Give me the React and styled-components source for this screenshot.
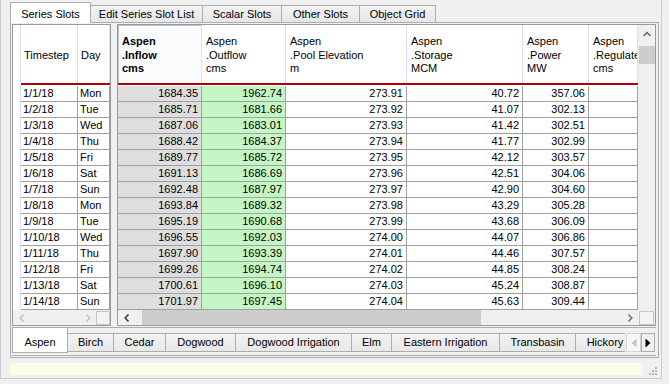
import React from 'react';
import styled, { createGlobalStyle, css } from 'styled-components';

const GlobalStyle = createGlobalStyle`
  html, body { margin: 0; padding: 0; background: #f0f0f0; }
  body { font-family: "Liberation Sans", Arial, sans-serif; font-size: 11px; color: #000; }
  * { box-sizing: border-box; }
`;

const Frame = styled.div`
  width: 662px;
  height: 379px;
  border: 1px solid #cdcdcd;
  border-top: none;
  padding: 0 2px 0 9px;
  display: flex;
  flex-direction: column;
  & > * { flex-shrink: 0; }
`;

const TopTabBar = styled.div`
  height: 22px;
  display: flex;
  align-items: flex-end;
  position: relative;
  z-index: 2;
`;

const TopTab = styled.div`
  width: ${p => p.$w}px;
  height: 17px;
  margin-left: -1px;
  border: 1px solid #adadad;
  border-bottom: none;
  background: linear-gradient(#f2f2f2, #e7e7e7);
  display: flex;
  align-items: center;
  justify-content: center;
  line-height: 16px;
  white-space: nowrap;
  &:first-child { margin-left: 0; }
  ${p => p.$active && css`
    height: 21px;
    margin-bottom: -1px;
    background: #ffffff;
    align-items: flex-start;
    padding-top: 3px;
    position: relative;
    z-index: 1;
  `}
`;

const Pane = styled.div`
  height: 336px;
  border: 1px solid #adadad;
  background: #f0f0f0;
  padding: 1px 2px 1px 1px;
  display: flex;
  flex-direction: column;
  & > * { flex-shrink: 0; }
`;

const TablesRow = styled.div`
  display: flex;
  gap: 6px;
  height: 302px;
`;

const Table = styled.div`
  width: ${p => p.$w}px;
  height: 302px;
  border: 1px solid #9a9a9a;
  background: #ffffff;
  display: flex;
  flex-direction: column;
  overflow: hidden;
`;

const GridRow = styled.div`
  display: grid;
  grid-template-columns: ${p => p.$cols};
  height: ${p => p.$h}px;
`;

const HeadCell = styled.div`
  border-right: 1px solid #d6e2ef;
  padding: 3px 0 0 ${p => p.$pl ?? 4}px;
  display: flex;
  flex-direction: column;
  justify-content: center;
  line-height: 13.5px;
  white-space: nowrap;
  overflow: hidden;
  font-weight: ${p => (p.$bold ? 'bold' : 'normal')};
  ${p => p.$current && css`
    box-shadow: inset 1px 1px 0 #b4bdc9;
    background: #fbfcfd;
  `}
`;

const RedLine = styled.div`
  height: 2px;
  margin-left: ${p => p.$indent || 0}px;
  background: #b20000;
`;

const Body = styled.div`
  padding-top: 1px;
  display: flex;
  flex-direction: column;
`;

const Cell = styled.div`
  height: 16px;
  line-height: 15px;
  border-right: 1px solid #a0a0a0;
  border-bottom: 1px solid #a0a0a0;
  background: ${p => p.$bg || '#ffffff'};
  text-align: ${p => p.$align || 'left'};
  padding: ${p => (p.$align === 'right' ? '0 3px 0 0' : '0 0 0 2px')};
  white-space: nowrap;
  overflow: hidden;
`;

const RowHeadCell = styled.div`
  height: 16px;
  border-right: 1px solid #d6e2ef;
  background: #ffffff;
`;

const ScrollRow = styled.div`
  display: flex;
  height: 15px;
`;

const HTrack = styled.div`
  width: ${p => p.$w}px;
  display: flex;
  align-items: stretch;
  background: #f0f0f0;
`;

const ArrowBtn = styled.div`
  width: ${p => p.$w || 17}px;
  display: flex;
  align-items: center;
  justify-content: center;
  flex-shrink: 0;
`;

const HThumb = styled.div`
  margin-left: ${p => p.$ml}px;
  width: ${p => p.$w}px;
  background: #cdcdcd;
`;

const Spacer = styled.div`
  flex: 1;
`;

const CornerBox = styled.div`
  width: ${p => p.$w}px;
  background: #f0f0f0;
  display: flex;
  align-items: flex-end;
  justify-content: ${p => p.$justify || 'flex-start'};
`;

const CornerSquare = styled.div`
  width: ${p => p.$w}px;
  height: 14px;
  margin-left: ${p => p.$ml || 0}px;
  border: 1px solid #c6c6c6;
  background: #f3f3f3;
`;

const TopPart = styled.div`
  display: flex;
  height: 285px;
`;

const GridArea = styled.div`
  width: 520px;
  display: flex;
  flex-direction: column;
  overflow: hidden;
`;

const VScroll = styled.div`
  width: 17px;
  background: #f0f0f0;
  display: flex;
  flex-direction: column;
`;

const VArrow = styled.div`
  height: 17px;
  display: flex;
  align-items: center;
  justify-content: center;
`;

const VThumb = styled.div`
  margin: 4px 0 0 1px;
  width: 16px;
  height: 18px;
  background: #cdcdcd;
`;

const BottomStrip = styled.div`
  margin-top: 1px;
  height: 29px;
  border-top: 1px solid #adadad;
  border-bottom: 1px solid #adadad;
  display: flex;
  align-items: flex-start;
`;

const TabList = styled.div`
  width: 613px;
  display: flex;
  align-items: flex-start;
  overflow: hidden;
  height: 100%;
`;

const BottomTab = styled.div`
  width: ${p => p.$w}px;
  flex-shrink: 0;
  margin-top: 5px;
  margin-left: -1px;
  height: 19px;
  border: 1px solid #adadad;
  background: linear-gradient(#f2f2f2, #e8e8e8);
  text-align: center;
  line-height: 17px;
  white-space: nowrap;
  &:first-child { margin-left: 0; }
  ${p => p.$active && css`
    margin-top: 0;
    height: 25px;
    border-top: none;
    background: #ffffff;
    padding-top: 7px;
    line-height: 15px;
    position: relative;
    z-index: 1;
  `}
`;

const TabScrollBtn = styled.div`
  margin-top: 5px;
  margin-left: ${p => p.$ml || 0}px;
  width: ${p => p.$w}px;
  height: 19px;
  border: 1px solid ${p => (p.$enabled ? '#adadad' : '#d4d4d4')};
  background: ${p => (p.$enabled ? '#f0f0f0' : '#f6f6f6')};
  display: flex;
  align-items: center;
  justify-content: center;
  flex-shrink: 0;
`;

const StatusRow = styled.div`
  margin-top: 5px;
  height: 12px;
  display: flex;
`;

const StatusBar = styled.div`
  width: 632px;
  background: #fbfbe7;
`;

const Grip = styled.div`
  flex: 1;
  display: flex;
  align-items: flex-end;
  justify-content: flex-end;
  padding-right: 2px;
`;

const Chevron = ({ dir, color }) => {
  const pts = {
    left: '4.5,0.5 1.2,4 4.5,7.5',
    right: '1.5,0.5 4.8,4 1.5,7.5',
  }[dir];
  return (
    <svg width="6" height="8" viewBox="0 0 6 8">
      <polyline points={pts} fill="none" stroke={color} strokeWidth="1.5" />
    </svg>
  );
};

const UpChevron = ({ color }) => (
  <svg width="8" height="6" viewBox="0 0 8 6">
    <polyline points="0.5,5 4,1.5 7.5,5" fill="none" stroke={color} strokeWidth="1.5" />
  </svg>
);

const Triangle = ({ dir, color }) => (
  <svg width="6" height="10" viewBox="0 0 6 10">
    <polygon points={dir === 'left' ? '5.5,0.5 0.5,5 5.5,9.5' : '0.5,0.5 5.5,5 0.5,9.5'} fill={color} />
  </svg>
);

const GripDots = () => (
  <svg width="8" height="8" viewBox="0 0 8 8">
    {[[6, 0], [3, 3], [6, 3], [0, 6], [3, 6], [6, 6]].map(([x, y]) => (
      <rect key={`${x}-${y}`} x={x} y={y} width="2" height="2" fill="#b9b9b9" />
    ))}
  </svg>
);

const rows = [
  ['1/1/18', 'Mon', '1684.35', '1962.74', '273.91', '40.72', '357.06'],
  ['1/2/18', 'Tue', '1685.71', '1681.66', '273.92', '41.07', '302.13'],
  ['1/3/18', 'Wed', '1687.06', '1683.01', '273.93', '41.42', '302.51'],
  ['1/4/18', 'Thu', '1688.42', '1684.37', '273.94', '41.77', '302.99'],
  ['1/5/18', 'Fri', '1689.77', '1685.72', '273.95', '42.12', '303.57'],
  ['1/6/18', 'Sat', '1691.13', '1686.69', '273.96', '42.51', '304.06'],
  ['1/7/18', 'Sun', '1692.48', '1687.97', '273.97', '42.90', '304.60'],
  ['1/8/18', 'Mon', '1693.84', '1689.32', '273.98', '43.29', '305.28'],
  ['1/9/18', 'Tue', '1695.19', '1690.68', '273.99', '43.68', '306.09'],
  ['1/10/18', 'Wed', '1696.55', '1692.03', '274.00', '44.07', '306.86'],
  ['1/11/18', 'Thu', '1697.90', '1693.39', '274.01', '44.46', '307.57'],
  ['1/12/18', 'Fri', '1699.26', '1694.74', '274.02', '44.85', '308.24'],
  ['1/13/18', 'Sat', '1700.61', '1696.10', '274.03', '45.24', '308.87'],
  ['1/14/18', 'Sun', '1701.97', '1697.45', '274.04', '45.63', '309.44'],
];

const topTabs = [
  { label: 'Series Slots', w: 81, active: true },
  { label: 'Edit Series Slot List', w: 113 },
  { label: 'Scalar Slots', w: 80 },
  { label: 'Other Slots', w: 79 },
  { label: 'Object Grid', w: 77 },
];

const bottomTabs = [
  { label: 'Aspen', w: 56, active: true },
  { label: 'Birch', w: 47 },
  { label: 'Cedar', w: 53 },
  { label: 'Dogwood', w: 71 },
  { label: 'Dogwood Irrigation', w: 117 },
  { label: 'Elm', w: 41 },
  { label: 'Eastern Irrigation', w: 109 },
  { label: 'Transbasin', w: 77 },
  { label: 'Hickory', w: 60 },
];

const slotCols = [
  { lines: ['Aspen', '.Inflow', 'cms'], bold: true, current: true, bg: '#dedede' },
  { lines: ['Aspen', '.Outflow', 'cms'], bg: '#c4f7c4' },
  { lines: ['Aspen', '.Pool Elevation', 'm'] },
  { lines: ['Aspen', '.Storage', 'MCM'] },
  { lines: ['Aspen', '.Power', 'MW'] },
  { lines: ['Aspen', '.Regulated', 'cms'] },
];

const LEFT_COLS = '8px 57px 32px';
const RIGHT_COLS = '84px 84px 121px 116px 66px 49px';

export default function App() {
  return (
    <>
      <GlobalStyle />
      <Frame>
        <TopTabBar>
          {topTabs.map(t => (
            <TopTab key={t.label} $w={t.w} $active={t.active}>{t.label}</TopTab>
          ))}
        </TopTabBar>
        <Pane>
          <TablesRow>
            <Table $w={99}>
              <GridRow $cols={LEFT_COLS} $h={58}>
                <HeadCell />
                <HeadCell $pl={3}><span>Timestep</span></HeadCell>
                <HeadCell $pl={3}><span>Day</span></HeadCell>
              </GridRow>
              <RedLine $indent={8} />
              <Body>
                {rows.map(r => (
                  <GridRow key={r[0]} $cols={LEFT_COLS} $h={16}>
                    <RowHeadCell />
                    <Cell>{r[0]}</Cell>
                    <Cell>{r[1]}</Cell>
                  </GridRow>
                ))}
              </Body>
              <ScrollRow>
                <HTrack $w={83}>
                  <ArrowBtn><Chevron dir="left" color="#c2c2c2" /></ArrowBtn>
                  <Spacer />
                  <ArrowBtn><Chevron dir="right" color="#c2c2c2" /></ArrowBtn>
                </HTrack>
                <CornerBox $w={14}>
                  <CornerSquare $w={14} />
                </CornerBox>
              </ScrollRow>
            </Table>
            <Table $w={539}>
              <TopPart>
                <GridArea>
                  <GridRow $cols={RIGHT_COLS} $h={58}>
                    {slotCols.map(c => (
                      <HeadCell key={c.lines[1]} $bold={c.bold} $current={c.current}>
                        {c.lines.map(l => <span key={l}>{l}</span>)}
                      </HeadCell>
                    ))}
                  </GridRow>
                  <RedLine />
                  <Body>
                    {rows.map(r => (
                      <GridRow key={r[0]} $cols={RIGHT_COLS} $h={16}>
                        {slotCols.map((c, i) => (
                          <Cell key={c.lines[1]} $align="right" $bg={c.bg}>{r[i + 2] || ''}</Cell>
                        ))}
                      </GridRow>
                    ))}
                  </Body>
                </GridArea>
                <VScroll>
                  <VArrow><UpChevron color="#606060" /></VArrow>
                  <VThumb />
                </VScroll>
              </TopPart>
              <ScrollRow>
                <HTrack $w={520}>
                  <ArrowBtn><Chevron dir="left" color="#333333" /></ArrowBtn>
                  <HThumb $ml={7} $w={339} />
                  <Spacer />
                  <ArrowBtn><Chevron dir="right" color="#707070" /></ArrowBtn>
                </HTrack>
                <CornerBox $w={17}>
                  <CornerSquare $w={15} $ml={1} />
                </CornerBox>
              </ScrollRow>
            </Table>
          </TablesRow>
          <BottomStrip>
            <TabList>
              {bottomTabs.map(t => (
                <BottomTab key={t.label} $w={t.w} $active={t.active}>{t.label}</BottomTab>
              ))}
            </TabList>
            <TabScrollBtn $w={15} $ml={1}><Triangle dir="left" color="#c4c4c4" /></TabScrollBtn>
            <TabScrollBtn $w={14} $enabled><Triangle dir="right" color="#000000" /></TabScrollBtn>
          </BottomStrip>
        </Pane>
        <StatusRow>
          <StatusBar />
          <Grip><GripDots /></Grip>
        </StatusRow>
      </Frame>
    </>
  );
}
